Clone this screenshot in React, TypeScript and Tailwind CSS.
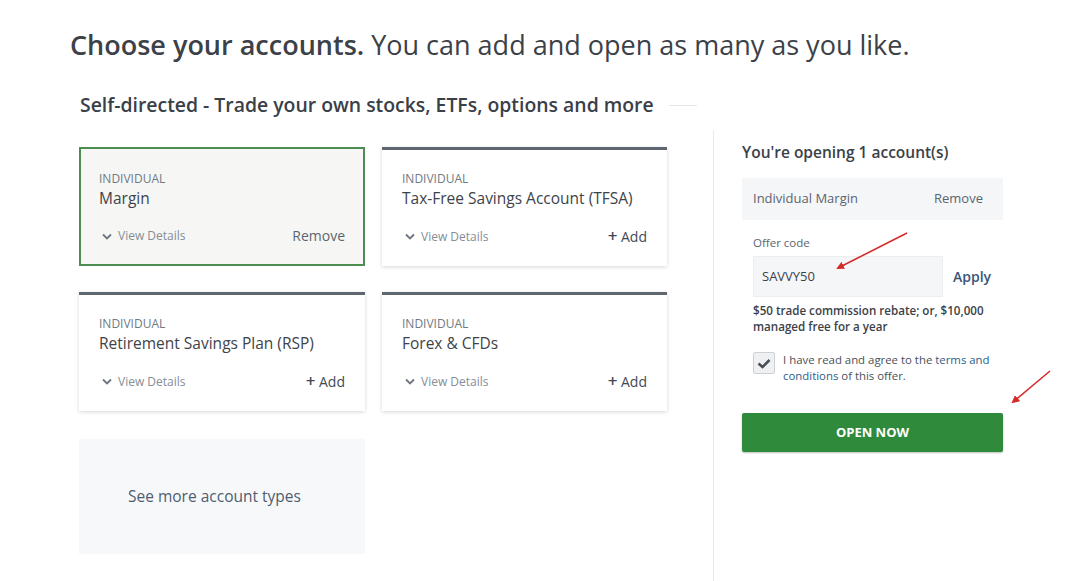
function Chevron() {
  return (
    <svg width="10" height="7" viewBox="0 0 10 7" className="mr-[6px]">
      <polyline points="1,1.5 5,5.5 9,1.5" fill="none" stroke="#6d7680" strokeWidth="1.8" />
    </svg>
  );
}

type Card = { title: string; selected?: boolean };

const cards: Card[] = [
  { title: "Margin", selected: true },
  { title: "Tax-Free Savings Account (TFSA)" },
  { title: "Retirement Savings Plan (RSP)" },
  { title: "Forex & CFDs" },
];

function AccountCard({ card }: { card: Card }) {
  const base = card.selected
    ? "h-[119px] border-2 border-[#4d8d52] bg-[#f6f7f4] pr-[18px] pl-[18px] pt-[22px]"
    : "h-[119px] border-t-[3px] border-[#5e6770] bg-white pr-[20px] pl-[20px] pt-[21px] shadow-[0_1px_4px_rgba(0,0,0,0.16)]";
  return (
    <div className={base}>
      <p className="text-[12px] leading-4 text-[#6f7a84] uppercase">Individual</p>
      <p className="mt-[1px] text-[15.5px] leading-5 text-[#3e434a]">{card.title}</p>
      <div className="mt-[18px] flex items-center justify-between">
        <span className="flex items-center pl-[3px] text-[12px] leading-5 text-[#858d96]">
          <Chevron />
          View Details
        </span>
        {card.selected ? (
          <span className="text-[14px] leading-5 text-[#5b6570]">Remove</span>
        ) : (
          <span className="text-[14px] leading-5 text-[#3f4a58]">
            <span className="text-[17px] font-semibold">+</span> Add
          </span>
        )}
      </div>
    </div>
  );
}

export default function App() {
  return (
    <div className="relative h-[581px] w-[1080px] overflow-hidden bg-white font-['Open_Sans',sans-serif] text-[#3b4148]">
      <h1 className="pl-[70px] pt-[29px] text-[27px] leading-8 text-[#3c4148]">
        <span className="font-semibold">Choose your accounts.</span> You can add and open as many as you like.
      </h1>

      <div className="mt-[32px] flex items-center pl-[80px]">
        <h2 className="text-[19.4px] leading-6 font-semibold text-[#3a4048]">
          Self-directed - Trade your own stocks, ETFs, options and more
        </h2>
        <span className="ml-[15px] h-px w-[28px] bg-[#e4e6e9]" />
      </div>

      <div className="mt-[13px] flex">
        <div className="h-[451px] w-[714px] border-r border-[#e9eaec] pt-[17px] pr-[46px] pl-[79px]">
          <div className="grid grid-cols-[286px_285px] gap-x-[17px] gap-y-[26px]">
            {cards.map((card) => (
              <AccountCard card={card} key={card.title} />
            ))}
            <div className="mt-[2px] flex h-[115px] items-center bg-[#f7f8f9] pl-[49px] text-[15.5px] text-[#4f5d70]">
              See more account types
            </div>
          </div>
        </div>

        <div className="w-[289px] pt-[11px] pl-[28px]">
          <p className="text-[15.5px] leading-[22px] font-semibold text-[#3b4148]">You're opening 1 account(s)</p>
          <div className="mt-[15px] flex h-[42px] items-center justify-between bg-[#f5f6f8] pr-[20px] pl-[11px] text-[13px] text-[#5b6470]">
            <span>Individual Margin</span>
            <span>Remove</span>
          </div>

          <div className="pl-[11px]">
            <p className="mt-[15px] text-[11.5px] leading-4 text-[#5b6470]">Offer code</p>
            <div className="mt-[5px] flex items-center">
              <div className="flex h-[41px] w-[190px] items-center border border-[#eceef0] bg-[#f5f6f8] pl-[8px] text-[13px] text-[#3b4148]">
                SAVVY50
              </div>
              <span className="ml-[10px] text-[14px] font-semibold text-[#3b5577]">Apply</span>
            </div>
            <p className="mt-[6px] w-[240px] text-[11.6px] leading-4 font-semibold text-[#3b4148]">
              $50 trade commission rebate; or, $10,000 managed free for a year
            </p>
            <div className="mt-[17px] flex items-start">
              <span className="flex h-[22px] w-[22px] shrink-0 items-center justify-center rounded-[2px] border border-[#cdd0d4] bg-[#eef0f2]">
                <svg width="14" height="11" viewBox="0 0 14 11">
                  <polyline points="1.5,5.5 5.5,9 12.5,2" fill="none" stroke="#4a4f56" strokeWidth="2.6" />
                </svg>
              </span>
              <p className="ml-[8px] w-[220px] text-[11.4px] leading-4 text-[#4a5058]">
                I have read and agree to the <span className="text-[#2d5e89]">terms and conditions</span> of this
                offer.
              </p>
            </div>
          </div>

          <button
            className="mt-[29px] flex h-[39px] w-[261px] items-center justify-center rounded-[2px] bg-[#2f8a3c] text-[13px] font-bold text-white shadow-[0_1px_2px_rgba(0,0,0,0.25)]"
            type="button"
          >
            OPEN NOW
          </button>
        </div>
      </div>

      <svg className="pointer-events-none absolute top-0 left-0" width="1080" height="581">
        <defs>
          <marker id="head" markerWidth="8" markerHeight="8" refX="6" refY="4" orient="auto" markerUnits="userSpaceOnUse">
            <path d="M0,0 L8,4 L0,8 Z" fill="#d62b2b" />
          </marker>
        </defs>
        <line x1="907" y1="233" x2="838" y2="268" stroke="#d62b2b" strokeWidth="1.6" markerEnd="url(#head)" />
        <line x1="1050" y1="371" x2="1013" y2="402" stroke="#d62b2b" strokeWidth="1.6" markerEnd="url(#head)" />
      </svg>
    </div>
  );
}
